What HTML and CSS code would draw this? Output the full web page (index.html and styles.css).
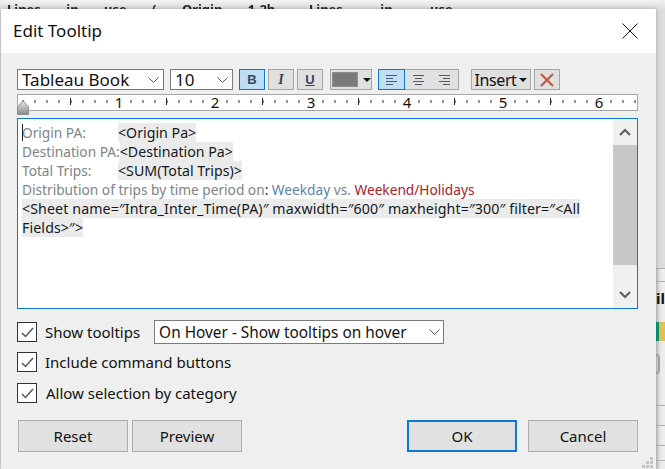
FILE: index.html
```html
<!DOCTYPE html>
<html>
<head>
    <meta http-equiv="Content-Type" content="text/html; charset=utf-8" />
    <title>Edit Tooltip</title>
    <link rel="stylesheet" href="styles.css">
</head>

<body>
    <div class="backdrop">
        <div class="behind-top">
            <span class="behind-a">Lines in use ( Origin 1-2h</span>
            <span class="behind-b">Lines in use</span>
        </div>
        <div class="behind-side">
            <span class="side-rule first"></span>
            <span class="side-rule second"></span>
            <span class="behind-text">il</span>
            <span class="behind-icon"></span>
            <span class="behind-box"></span>
            <span class="side-rule third"></span>
            <span class="side-rule fourth"></span>
            <span class="side-rule fourth"></span>
            <span class="side-rule fifth"></span>
        </div>
    </div>

    <section class="dialog">
        <header class="title-bar">
            <h1>Edit Tooltip</h1>
            <svg class="close" width="16" height="16" viewBox="0 0 16 16">
                <path d="M0.5 0.5L15.5 15.5M15.5 0.5L0.5 15.5" stroke="#111" stroke-width="1" fill="none" />
            </svg>
        </header>

        <div class="body">
            <div class="toolbar">
                <div class="combo font-combo">
                    <span>Tableau Book</span>
                    <svg class="chevron" width="11" height="6" viewBox="0 0 11 6"><path d="M0.5 0.5L5.5 5.5L10.5 0.5" /></svg>
                </div>
                <div class="combo size-combo">
                    <span>10</span>
                    <svg class="chevron" width="11" height="6" viewBox="0 0 11 6"><path d="M0.5 0.5L5.5 5.5L10.5 0.5" /></svg>
                </div>
                <div class="tool active bold">B</div>
                <div class="tool italic">I</div>
                <div class="tool under">U</div>
                <div class="tool color-tool">
                    <span class="swatch"></span>
                    <span class="caret"></span>
                </div>
                <div class="align-group">
                    <div class="align active">
                        <svg width="11" height="10" viewBox="0 0 11 10"><path d="M0 .5H11M0 3.5H7M0 6.5H11M0 9.5H7" /></svg>
                    </div>
                    <div class="align">
                        <svg width="11" height="10" viewBox="0 0 11 10"><path d="M0 .5H11M2 3.5H9M0 6.5H11M2 9.5H9" /></svg>
                    </div>
                    <div class="align">
                        <svg width="11" height="10" viewBox="0 0 11 10"><path d="M0 .5H11M4 3.5H11M0 6.5H11M4 9.5H11" /></svg>
                    </div>
                </div>
                <div class="tool insert">Insert<span class="caret"></span></div>
                <div class="tool clear">
                    <svg width="14" height="14" viewBox="0 0 14 14"><path d="M1 1L13 13M13 1L1 13" stroke="#bf5a40" stroke-width="2.2" fill="none" /></svg>
                </div>
            </div>

            <div class="ruler">
                <svg width="619" height="15" viewBox="0 0 619 15">
                    <defs>
                        <pattern id="small-ticks" x="4.5" y="0" width="12" height="15" patternUnits="userSpaceOnUse">
                            <rect x="0" y="5" width="1" height="3" fill="#222" />
                        </pattern>
                    </defs>
                    <rect width="619" height="15" fill="url(#small-ticks)" />
                    <path class="long-ticks" d="M52.5 3V10M148.5 3V10M244.5 3V10M340.5 3V10M436.5 3V10M532.5 3V10" />
                </svg>
                <div class="ruler-digits">
                    <span>1</span><span>2</span><span>3</span><span>4</span><span>5</span><span>6</span>
                </div>
                <svg class="thumb" width="12" height="14" viewBox="0 0 12 14">
                    <defs>
                        <linearGradient id="thumb-fill" x1="0" y1="0" x2="0" y2="1">
                            <stop offset="0" stop-color="#e4e4e4" />
                            <stop offset="1" stop-color="#8a8a8a" />
                        </linearGradient>
                    </defs>
                    <path d="M0.5 6L5.5 0.5H6.5L11.5 6V13.5H0.5Z" fill="url(#thumb-fill)" stroke="#8c8c8c" />
                </svg>
            </div>

            <div class="editor">
                <div class="editor-text">
                    <div class="line"><span class="caret-line"></span><span class="lbl tabbed">Origin PA:</span><span class="field">&lt;Origin Pa&gt;</span></div>
                    <div class="line"><span class="lbl">Destination PA:</span><span class="field">&lt;Destination Pa&gt;</span></div>
                    <div class="line"><span class="lbl tabbed">Total Trips:</span><span class="field">&lt;SUM(Total Trips)&gt;</span></div>
                    <div class="line"><span class="lbl">Distribution of trips by time period on</span><span class="dark">:</span> <span class="blue">Weekday</span> <span class="lbl">vs.</span> <span class="red">Weekend/Holidays</span></div>
                    <div class="line"><span class="field sheet">&lt;Sheet name=″Intra_Inter_Time(PA)″ maxwidth=″600″ maxheight=″300″ filter=″&lt;All</span></div>
                    <div class="line"><span class="field sheet">Fields&gt;″&gt;</span></div>
                </div>
                <div class="scrollbar">
                    <div class="arrow">
                        <svg width="12" height="8" viewBox="0 0 12 8"><path d="M1 7L6 2L11 7" /></svg>
                    </div>
                    <div class="scroll-track"><div class="scroll-thumb"></div></div>
                    <div class="arrow">
                        <svg width="12" height="8" viewBox="0 0 12 8"><path d="M1 1L6 6L11 1" /></svg>
                    </div>
                </div>
            </div>

            <div class="options">
                <div class="option first">
                    <span class="check"><svg width="13" height="11" viewBox="0 0 13 11"><path d="M1 6L4.5 9.5L12 1" /></svg></span>
                    <label>Show tooltips</label>
                    <div class="combo hover-combo">
                        <span>On Hover - Show tooltips on hover</span>
                        <svg class="chevron" width="11" height="6" viewBox="0 0 11 6"><path d="M0.5 0.5L5.5 5.5L10.5 0.5" /></svg>
                    </div>
                </div>
                <div class="option second">
                    <span class="check"><svg width="13" height="11" viewBox="0 0 13 11"><path d="M1 6L4.5 9.5L12 1" /></svg></span>
                    <label>Include command buttons</label>
                </div>
                <div class="option third">
                    <span class="check"><svg width="13" height="11" viewBox="0 0 13 11"><path d="M1 6L4.5 9.5L12 1" /></svg></span>
                    <label>Allow selection by category</label>
                </div>
            </div>

            <div class="buttons">
                <button>Reset</button>
                <button>Preview</button>
                <span class="spacer"></span>
                <button class="primary">OK</button>
                <button>Cancel</button>
            </div>
        </div>

        <svg class="grip" width="11" height="11" viewBox="0 0 11 11">
            <path d="M8 0h3v3H8zM4 4h3v3H4zM8 4h3v3H8zM0 8h3v3H0zM4 8h3v3H4zM8 8h3v3H8z" fill="#c4c4c4" />
        </svg>
    </section>
</body>

</html>
```

FILE: styles.css
```css
html, body {
    margin: 0;
    padding: 0;
}
body {
    width: 665px;
    height: 469px;
    overflow: hidden;
    position: relative;
    background: #e6e6e6;
    font-family: "Noto Sans", "Open Sans", sans-serif;
    color: #111;
}
.backdrop {
    position: absolute;
    inset: 0;
    background: linear-gradient(to bottom, #f3f3f3, #dcdcdc 10px);
}
.behind-top {
    display: flex;
    padding: 0 0 0 7px;
    font-size: 13px;
    line-height: 18px;
    font-weight: 700;
    color: #222;
    white-space: nowrap;
    filter: blur(0.5px);
}
.behind-a {
    width: 290px;
    word-spacing: 22px;
}
.behind-b {
    padding-left: 12px;
    word-spacing: 34px;
}
.behind-side {
    position: absolute;
    left: 656px;
    top: 268px;
    width: 9px;
    height: 201px;
    overflow: hidden;
    background: linear-gradient(to right, #c8c8c8, #ececec 5px);
    display: flex;
    flex-direction: column;
}
.side-rule {
    display: block;
    flex: none;
    height: 1px;
    background: #b4b4b4;
}
.side-rule.second {
    margin-top: 12px;
}
.side-rule.third {
    margin-top: 31px;
}
.side-rule.fourth {
    margin-top: 19px;
}
.side-rule.fifth {
    margin-top: 14px;
}
.behind-text {
    display: block;
    flex: none;
    margin-top: 6px;
    font-size: 15px;
    font-weight: 700;
    line-height: 20px;
}
.behind-icon {
    display: block;
    flex: none;
    margin-top: 14px;
    height: 19px;
    background: #e3c050;
    border-left: 3px solid #0c9a77;
    box-sizing: border-box;
}
.behind-box {
    display: block;
    flex: none;
    margin-top: 13px;
    margin-left: -6px;
    width: 10px;
    height: 20px;
    box-sizing: border-box;
    border: 2px solid #a8a8a8;
    border-radius: 4px;
}

.dialog {
    position: absolute;
    left: 1px;
    top: 9px;
    width: 655px;
    height: 460px;
    background: #efefef;
    box-shadow: 0 0 5px rgba(0, 0, 0, 0.25);
}
.title-bar {
    box-sizing: border-box;
    height: 44px;
    background: #fff;
    display: flex;
    align-items: center;
    justify-content: space-between;
    padding: 0 18px 2px 12px;
}
.title-bar h1 {
    margin: 2px 0 0;
    font-size: 17px;
    line-height: 18px;
    font-weight: 400;
}
.close {
    margin-top: 1px;
}
.body {
    padding: 16px 18px 0 16px;
}

.toolbar {
    display: flex;
    height: 21px;
}
.combo {
    box-sizing: border-box;
    height: 21px;
    background: #fff;
    border: 1px solid #7a7a7a;
    display: flex;
    align-items: center;
    justify-content: space-between;
    padding: 0 4px 0 4px;
    font-size: 17px;
    white-space: nowrap;
}
.chevron path {
    fill: none;
    stroke: #555;
}
.font-combo {
    width: 147px;
}
.size-combo {
    width: 63px;
    margin-left: 6px;
}
.tool {
    box-sizing: border-box;
    height: 21px;
    width: 26px;
    margin-left: 3px;
    background: #e0e0e0;
    border: 1px solid #a6a6a6;
    display: flex;
    align-items: center;
    justify-content: center;
}
.tool.active, .align.active {
    background: #bfddf5;
    border: 1px solid #0a78d4;
}
.bold {
    margin-left: 6px;
    font: 700 13px "Liberation Sans", sans-serif;
    color: #34495e;
}
.italic {
    font: italic 700 14px "Liberation Serif", serif;
    color: #3b4654;
}
.under {
    font: 700 13px "Liberation Sans", sans-serif;
    color: #34495e;
    text-decoration: underline;
}
.color-tool {
    width: 42px;
    margin-left: 7px;
    justify-content: flex-start;
    padding-left: 1px;
}
.swatch {
    box-sizing: border-box;
    width: 26px;
    height: 15px;
    background: #7a7a7a;
    border: 1px solid #8e8e8e;
}
.caret {
    width: 0;
    height: 0;
    margin-left: 5px;
    border-left: 4px solid transparent;
    border-right: 4px solid transparent;
    border-top: 4px solid #111;
}
.align-group {
    box-sizing: border-box;
    margin-left: 6px;
    width: 81px;
    height: 21px;
    display: flex;
    background: #e0e0e0;
    border: 1px solid #a6a6a6;
}
.align {
    box-sizing: border-box;
    flex: 1;
    margin: -1px 0;
    display: flex;
    align-items: center;
    justify-content: center;
}
.align.active {
    margin-left: -1px;
    flex: 0 0 27px;
}
.align svg path {
    fill: none;
    stroke: #4a5a6a;
}
.insert {
    width: 60px;
    margin-left: 12px;
    font-size: 16px;
    font-family: "Noto Sans", sans-serif;
    letter-spacing: -0.4px;
}
.insert .caret {
    margin-left: 3px;
}
.clear {
    margin-left: 3px;
}

.ruler {
    position: relative;
    box-sizing: border-box;
    width: 621px;
    height: 17px;
    margin-top: 4px;
    background: #fff;
    border: 1px solid #a6a6a6;
}
.ruler svg {
    display: block;
}
.long-ticks {
    stroke: #222;
    fill: none;
}
.ruler-digits {
    position: absolute;
    left: 53px;
    top: 0;
    display: flex;
    font-size: 15px;
    line-height: 15px;
}
.ruler-digits span {
    width: 96px;
    text-align: center;
    background: linear-gradient(#fff, #fff) center / 11px 100% no-repeat;
}
.ruler .thumb {
    position: absolute;
    left: -1px;
    top: 6px;
}

.editor {
    box-sizing: border-box;
    width: 621px;
    height: 191px;
    margin-top: 7px;
    background: #fff;
    border: 1px solid #0a78d4;
    display: flex;
}
.editor-text {
    flex: 1;
    padding: 4px 0 0 4px;
    font-size: 13.7px;
    line-height: 19px;
    white-space: nowrap;
}
.line {
    height: 19px;
    position: relative;
}
.caret-line {
    position: absolute;
    left: 0;
    top: 1px;
    width: 1px;
    height: 17px;
    background: #222;
}
.lbl {
    color: #7b848c;
}
.tabbed {
    display: inline-block;
    width: 96px;
}
.field {
    background: #ebebeb;
    color: #15191d;
    display: inline-block;
    font-size: 14.2px;
}
.field.sheet {
    letter-spacing: 0.11px;
}
.dark {
    color: #333;
}
.blue {
    color: #5b83ad;
}
.red {
    color: #b0202a;
}
.scrollbar {
    width: 24px;
    background: #f0f0f0;
    display: flex;
    flex-direction: column;
}
.arrow {
    height: 26px;
    display: flex;
    align-items: center;
    justify-content: center;
}
.arrow svg path {
    fill: none;
    stroke: #606060;
    stroke-width: 2.2;
}
.scroll-track {
    flex: 1;
}
.scroll-thumb {
    height: 120px;
    background: #c8c8c8;
}

.option {
    display: flex;
    align-items: center;
    height: 20px;
    font-size: 15px;
}
.option.first {
    margin-top: 13px;
}
.option.second {
    margin-top: 10px;
}
.option.third {
    margin-top: 11px;
}
.option label {
    margin-left: 8px;
}
.option.third label {
    margin-left: 9px;
}
.check {
    box-sizing: border-box;
    width: 20px;
    height: 20px;
    background: #fff;
    border: 1px solid #333;
    display: flex;
    align-items: center;
    justify-content: center;
    flex: none;
}
.check path {
    fill: none;
    stroke: #555;
    stroke-width: 1.5;
}
.hover-combo {
    box-sizing: border-box;
    width: 290px;
    height: 24px;
    margin-left: 14px;
    font-size: 15.4px;
    padding-right: 3px;
}

.buttons {
    display: flex;
    gap: 4px;
    margin: 17px 0 0 1px;
}
.buttons button {
    box-sizing: border-box;
    width: 110px;
    height: 32px;
    background: #e1e1e1;
    border: 1px solid #adadad;
    border-radius: 0;
    font-family: inherit;
    font-size: 15px;
    color: #111;
    padding: 0;
}
.spacer {
    flex: 1;
}
.buttons button.primary {
    border: 2px solid #0a78d4;
    margin-right: 7px;
}
.grip {
    position: absolute;
    right: 3px;
    bottom: 1px;
}
```
